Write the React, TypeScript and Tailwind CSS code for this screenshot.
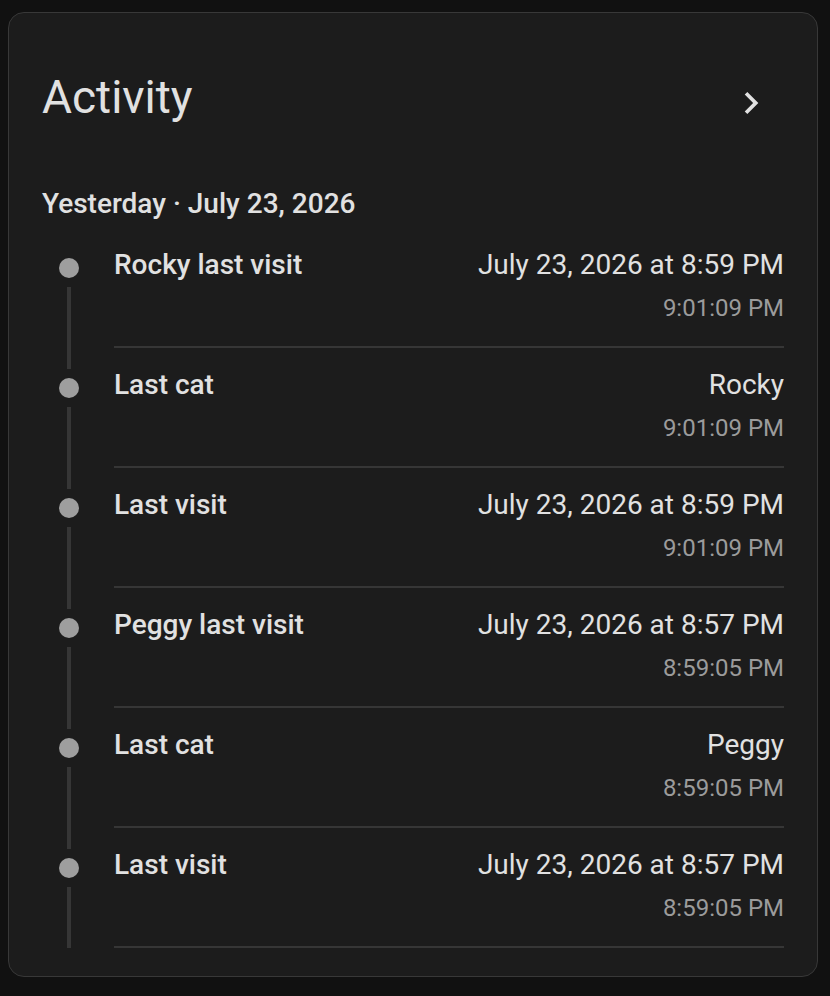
import React from 'react';

type Entry = {
  title: string;
  value: string;
  time: string;
};

const entries: Entry[] = [
  { title: 'Rocky last visit', value: 'July 23, 2026 at 8:59 PM', time: '9:01:09 PM' },
  { title: 'Last cat', value: 'Rocky', time: '9:01:09 PM' },
  { title: 'Last visit', value: 'July 23, 2026 at 8:59 PM', time: '9:01:09 PM' },
  { title: 'Peggy last visit', value: 'July 23, 2026 at 8:57 PM', time: '8:59:05 PM' },
  { title: 'Last cat', value: 'Peggy', time: '8:59:05 PM' },
  { title: 'Last visit', value: 'July 23, 2026 at 8:57 PM', time: '8:59:05 PM' },
];

function ChevronRight() {
  return (
    <svg width="44" height="44" viewBox="0 0 24 24" className="mt-[12px] mr-[11px] shrink-0">
      <path fill="#e1e1e1" d="M8.59,16.58L13.17,12L8.59,7.41L10,6L16,12L10,18L8.59,16.58Z" />
    </svg>
  );
}

function TimelineRow({ entry, first }: { entry: Entry; first: boolean }) {
  return (
    <div className="flex">
      {/* rail: line, dot, line */}
      <div className="flex w-[54px] shrink-0 flex-col items-center">
        <div className={`h-[21px] w-[4px] ${first ? 'bg-transparent' : 'bg-[#363636]'}`} />
        <div className="mt-[9px] h-[20px] w-[20px] rounded-full bg-[#9e9e9e]" />
        <div className="mt-[9px] w-[4px] flex-1 bg-[#363636]" />
      </div>

      <div className="ml-[18px] flex-1 border-b-2 border-[#363636] pt-[17px] pb-[22px]">
        <div className="flex items-start justify-between">
          <span className="text-[28px] leading-[40px] font-medium text-[#e1e1e1]">{entry.title}</span>
          <span className="text-[28px] leading-[40px] text-[#e1e1e1]">{entry.value}</span>
        </div>
        <div className="mt-[7px] text-right text-[24px] leading-[32px] text-[#9b9b9b]">{entry.time}</div>
      </div>
    </div>
  );
}

export default function App() {
  return (
    <div className="min-h-[996px] bg-[#111111] pt-[12px] pb-[20px] font-['Roboto','Liberation_Sans',sans-serif]">
      <div className="ml-[8px] w-[810px] rounded-[16px] border border-[#383838] bg-[#1c1c1c] px-[33px] pt-[56px] pb-[28px]">
        {/* Header */}
        <div className="flex items-start justify-between">
          <h1 className="text-[46px] leading-[56px] font-normal text-[#e1e1e1]">Activity</h1>
          <ChevronRight />
        </div>

        {/* Day label */}
        <div className="mt-[63px] mb-[8px] text-[28px] leading-[32px] font-medium text-[#e1e1e1]">
          Yesterday · July 23, 2026
        </div>

        {/* Entries */}
        <div className="flex flex-col">
          {entries.map((entry, i) => (
            <TimelineRow key={i} entry={entry} first={i === 0} />
          ))}
        </div>
      </div>
    </div>
  );
}
